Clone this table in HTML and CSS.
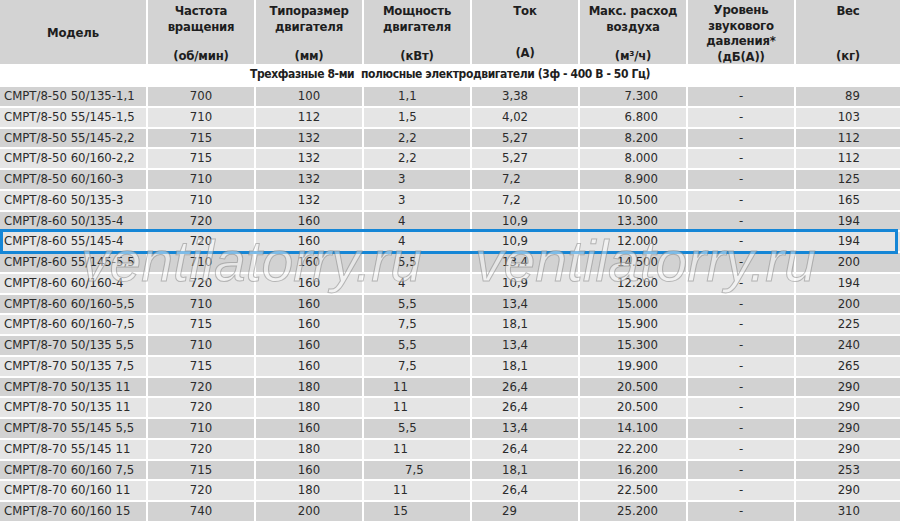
FILE: index.html
```html
<!DOCTYPE html>
<html lang="ru">
<head>
<meta charset="utf-8">
<title>СМРТ/8 — трехфазные 8-ми полюсные электродвигатели</title>
<link rel="stylesheet" href="styles.css">
</head>
<body>
<div class="sheet">
  <div class="row head">
    <div class="h mid">Модель</div>
    <div class="h"><span>Частота<br>вращения</span><span>(об/мин)</span></div>
    <div class="h"><span>Типоразмер<br>двигателя</span><span>(мм)</span></div>
    <div class="h"><span>Мощность<br>двигателя</span><span>(кВт)</span></div>
    <div class="h amp"><span>Ток</span><span>(А)</span></div>
    <div class="h"><span>Макс. расход<br>воздуха</span><span>(м³/ч)</span></div>
    <div class="h tight"><span>Уровень<br>звукового<br>давления*</span><span>(дБ(А))</span></div>
    <div class="h"><span>Вес</span><span>(кг)</span></div>
  </div>
  <div class="row section">
    <div class="title">Трехфазные 8-ми&nbsp; полюсные электродвигатели (3ф - 400 В - 50 Гц)</div>
  </div>

  <div class="row d dark"><div class="c1">СМРТ/8-50 50/135-1,1</div><div class="c2">700</div><div class="c3">100</div><div class="c4">1,1</div><div class="c5">3,38</div><div class="c6">7.300</div><div class="c7">-</div><div class="c8">89</div></div>
  <div class="row d light"><div class="c1">СМРТ/8-50 55/145-1,5</div><div class="c2">710</div><div class="c3">112</div><div class="c4">1,5</div><div class="c5">4,02</div><div class="c6">6.800</div><div class="c7">-</div><div class="c8">103</div></div>
  <div class="row d dark"><div class="c1">СМРТ/8-50 55/145-2,2</div><div class="c2">715</div><div class="c3">132</div><div class="c4">2,2</div><div class="c5">5,27</div><div class="c6">8.200</div><div class="c7">-</div><div class="c8">112</div></div>
  <div class="row d light"><div class="c1">СМРТ/8-50 60/160-2,2</div><div class="c2">715</div><div class="c3">132</div><div class="c4">2,2</div><div class="c5">5,27</div><div class="c6">8.000</div><div class="c7">-</div><div class="c8">112</div></div>
  <div class="row d dark"><div class="c1">СМРТ/8-50 60/160-3</div><div class="c2">710</div><div class="c3">132</div><div class="c4">3</div><div class="c5">7,2</div><div class="c6">8.900</div><div class="c7">-</div><div class="c8">125</div></div>
  <div class="row d light"><div class="c1">СМРТ/8-60 50/135-3</div><div class="c2">710</div><div class="c3">132</div><div class="c4">3</div><div class="c5">7,2</div><div class="c6">10.500</div><div class="c7">-</div><div class="c8">165</div></div>
  <div class="row d dark"><div class="c1">СМРТ/8-60 50/135-4</div><div class="c2">720</div><div class="c3">160</div><div class="c4">4</div><div class="c5">10,9</div><div class="c6">13.300</div><div class="c7">-</div><div class="c8">194</div></div>
  <div class="row d light hl"><div class="c1">СМРТ/8-60 55/145-4</div><div class="c2">720</div><div class="c3">160</div><div class="c4">4</div><div class="c5">10,9</div><div class="c6">12.000</div><div class="c7">-</div><div class="c8">194</div></div>
  <div class="row d dark"><div class="c1">СМРТ/8-60 55/145-5,5</div><div class="c2">710</div><div class="c3">160</div><div class="c4">5,5</div><div class="c5">13,4</div><div class="c6">14.500</div><div class="c7">-</div><div class="c8">200</div></div>
  <div class="row d light"><div class="c1">СМРТ/8-60 60/160-4</div><div class="c2">720</div><div class="c3">160</div><div class="c4">4</div><div class="c5">10,9</div><div class="c6">12.200</div><div class="c7">-</div><div class="c8">194</div></div>
  <div class="row d dark"><div class="c1">СМРТ/8-60 60/160-5,5</div><div class="c2">710</div><div class="c3">160</div><div class="c4">5,5</div><div class="c5">13,4</div><div class="c6">15.000</div><div class="c7">-</div><div class="c8">200</div></div>
  <div class="row d light"><div class="c1">СМРТ/8-60 60/160-7,5</div><div class="c2">715</div><div class="c3">160</div><div class="c4">7,5</div><div class="c5">18,1</div><div class="c6">15.900</div><div class="c7">-</div><div class="c8">225</div></div>
  <div class="row d dark"><div class="c1">СМРТ/8-70 50/135 5,5</div><div class="c2">710</div><div class="c3">160</div><div class="c4">5,5</div><div class="c5">13,4</div><div class="c6">15.300</div><div class="c7">-</div><div class="c8">240</div></div>
  <div class="row d light"><div class="c1">СМРТ/8-70 50/135 7,5</div><div class="c2">715</div><div class="c3">160</div><div class="c4">7,5</div><div class="c5">18,1</div><div class="c6">19.900</div><div class="c7">-</div><div class="c8">265</div></div>
  <div class="row d dark"><div class="c1">СМРТ/8-70 50/135 11</div><div class="c2">720</div><div class="c3">180</div><div class="c4 w">11</div><div class="c5">26,4</div><div class="c6">20.500</div><div class="c7">-</div><div class="c8">290</div></div>
  <div class="row d light"><div class="c1">СМРТ/8-70 50/135 11</div><div class="c2">720</div><div class="c3">180</div><div class="c4 w">11</div><div class="c5">26,4</div><div class="c6">20.500</div><div class="c7">-</div><div class="c8">290</div></div>
  <div class="row d dark"><div class="c1">СМРТ/8-70 55/145 5,5</div><div class="c2">710</div><div class="c3">160</div><div class="c4">5,5</div><div class="c5">13,4</div><div class="c6">14.100</div><div class="c7">-</div><div class="c8">290</div></div>
  <div class="row d light"><div class="c1">СМРТ/8-70 55/145 11</div><div class="c2">720</div><div class="c3">180</div><div class="c4 w">11</div><div class="c5">26,4</div><div class="c6">22.200</div><div class="c7">-</div><div class="c8">290</div></div>
  <div class="row d dark"><div class="c1">СМРТ/8-70 60/160 7,5</div><div class="c2">715</div><div class="c3">160</div><div class="c4 e">7,5</div><div class="c5">18,1</div><div class="c6">16.200</div><div class="c7">-</div><div class="c8">253</div></div>
  <div class="row d light"><div class="c1">СМРТ/8-70 60/160 11</div><div class="c2">720</div><div class="c3">180</div><div class="c4 w">11</div><div class="c5">26,4</div><div class="c6">22.500</div><div class="c7">-</div><div class="c8">290</div></div>
  <div class="row d dark"><div class="c1">СМРТ/8-70 60/160 15</div><div class="c2">740</div><div class="c3">200</div><div class="c4 w">15</div><div class="c5">29</div><div class="c6">25.200</div><div class="c7">-</div><div class="c8">310</div></div>

  <span class="mark m1">ventilatorry.ru</span>
  <span class="mark m2">ventilatorry.ru</span>
</div>
</body>
</html>
```

FILE: styles.css
```css
html, body {
  margin: 0;
  padding: 0;
  background: #ffffff;
}

body {
  font-family: "DejaVu Sans Condensed", "DejaVu Sans", sans-serif;
  color: #2b2b2b;
}

.sheet {
  position: relative;
  width: 900px;
  display: flex;
  flex-direction: column;
  gap: 2px;
  overflow: hidden;
}

.row {
  display: grid;
  grid-template-columns: 146px 106px 106px 106px 106px 106px 106px 104px;
  column-gap: 2px;
}

/* header */
.head {
  height: 62px;
}

.h {
  background: #d3d3d3;
  color: #1e1e1e;
  font-weight: bold;
  font-size: 13px;
  letter-spacing: -0.2px;
  line-height: 16px;
  text-align: center;
  display: flex;
  flex-direction: column;
  justify-content: space-between;
  padding: 3px 2px 0;
  box-sizing: border-box;
}

.h.mid {
  justify-content: center;
  padding-top: 1px;
}

.h.amp {
  padding-bottom: 3px;
}

.h.tight {
  line-height: 15.5px;
  padding-top: 2px;
  padding-bottom: 0;
}

/* section title */
.section {
  height: 21px;
}

.title {
  grid-column: 1 / -1;
  text-align: center;
  font-weight: bold;
  font-size: 12px;
  letter-spacing: -0.4px;
  line-height: 21px;
  color: #1e1e1e;
}

/* data rows */
.d {
  height: 18.75px;
  font-size: 13px;
  line-height: 18.75px;
}

.d > div {
  white-space: nowrap;
  overflow: hidden;
}

.dark > div {
  background: #d2d2d2;
}

.light > div {
  background: #e5e5e5;
}

.c1 { padding-left: 4px; }
.c2, .c3, .c7 { text-align: center; }
.c4 { padding-left: 34px; }
.c4.w { padding-left: 29px; }
.c4.e { padding-left: 41px; }
.c5 { padding-left: 30px; }
.c6 { text-align: right; padding-right: 28px; }
.c8 { text-align: right; padding-right: 40px; }

.hl {
  position: relative;
}

.hl::after {
  content: "";
  position: absolute;
  top: -3px;
  bottom: -3px;
  left: 0;
  right: 2px;
  border: 3px solid #1586d6;
  pointer-events: none;
}

/* watermark */
.mark {
  position: absolute;
  top: 233px;
  font-family: "Liberation Sans", Arial, sans-serif;
  font-style: italic;
  font-size: 57px;
  line-height: 57px;
  color: rgba(255, 255, 255, 0.45);
  -webkit-text-stroke: 1px rgba(125, 125, 125, 0.5);
  white-space: nowrap;
  pointer-events: none;
}

.m1 { left: 81px; }
.m2 { left: 475px; }
```
